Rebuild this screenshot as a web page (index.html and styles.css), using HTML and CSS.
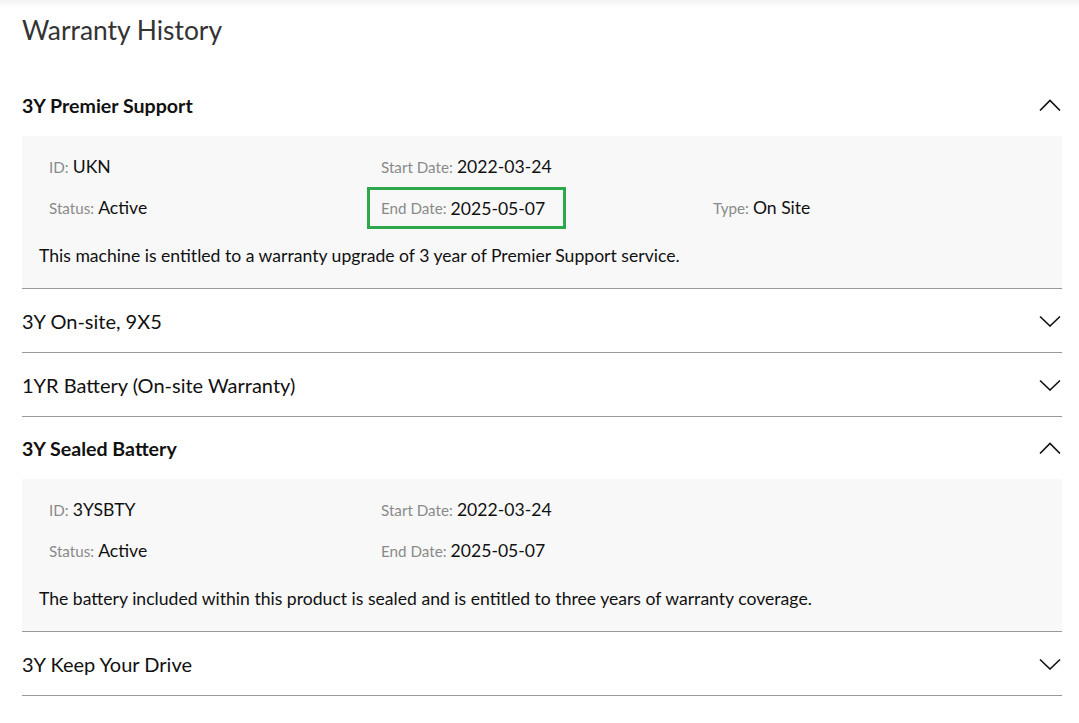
FILE: index.html
```html
<!DOCTYPE html>
<html lang="en">
<head>
<meta charset="utf-8">
<title>Warranty History</title>
<link rel="stylesheet" href="styles.css">
</head>
<body>
<main class="page">
  <h1 class="heading">Warranty History</h1>
  <div class="accordion">
    <section class="item open">
      <div class="item-head">
        <span class="item-title">3Y Premier Support</span>
        <svg class="chev" width="22" height="12" viewBox="0 0 22 12"><path d="M1 11.5 L11 1.5 L21 11.5" fill="none" stroke="#111" stroke-width="1.6"/></svg>
      </div>
      <div class="panel">
        <div class="fields">
          <div class="field"><span class="label">ID:</span>&nbsp;<span class="value">UKN</span></div>
          <div class="field"><span class="label">Start Date:</span>&nbsp;<span class="value">2022-03-24</span></div>
          <div class="field"></div>
          <div class="field"><span class="label">Status:</span>&nbsp;<span class="value">Active</span></div>
          <div class="field highlight"><span class="label">End Date:</span>&nbsp;<span class="value">2025-05-07</span></div>
          <div class="field"><span class="label">Type:</span>&nbsp;<span class="value">On Site</span></div>
        </div>
        <p class="desc">This machine is entitled to a warranty upgrade of 3 year of Premier Support service.</p>
      </div>
    </section>
    <section class="item">
      <div class="item-head">
        <span class="item-title">3Y On-site, 9X5</span>
        <svg class="chev" width="22" height="12" viewBox="0 0 22 12"><path d="M1 1.5 L11 11 L21 1.5" fill="none" stroke="#111" stroke-width="1.6"/></svg>
      </div>
    </section>
    <section class="item">
      <div class="item-head">
        <span class="item-title">1YR Battery (On-site Warranty)</span>
        <svg class="chev" width="22" height="12" viewBox="0 0 22 12"><path d="M1 1.5 L11 11 L21 1.5" fill="none" stroke="#111" stroke-width="1.6"/></svg>
      </div>
    </section>
    <section class="item open">
      <div class="item-head">
        <span class="item-title">3Y Sealed Battery</span>
        <svg class="chev" width="22" height="12" viewBox="0 0 22 12"><path d="M1 11.5 L11 1.5 L21 11.5" fill="none" stroke="#111" stroke-width="1.6"/></svg>
      </div>
      <div class="panel">
        <div class="fields">
          <div class="field"><span class="label">ID:</span>&nbsp;<span class="value">3YSBTY</span></div>
          <div class="field"><span class="label">Start Date:</span>&nbsp;<span class="value">2022-03-24</span></div>
          <div class="field"></div>
          <div class="field"><span class="label">Status:</span>&nbsp;<span class="value">Active</span></div>
          <div class="field"><span class="label">End Date:</span>&nbsp;<span class="value">2025-05-07</span></div>
          <div class="field"></div>
        </div>
        <p class="desc">The battery included within this product is sealed and is entitled to three years of warranty coverage.</p>
      </div>
    </section>
    <section class="item">
      <div class="item-head">
        <span class="item-title">3Y Keep Your Drive</span>
        <svg class="chev" width="22" height="12" viewBox="0 0 22 12"><path d="M1 1.5 L11 11 L21 1.5" fill="none" stroke="#111" stroke-width="1.6"/></svg>
      </div>
    </section>
  </div>
</main>
</body>
</html>
```

FILE: styles.css
```css
html, body {
  margin: 0;
  padding: 0;
}
body {
  background: linear-gradient(#f2f2f2, #ffffff 8px) no-repeat;
  background-color: #ffffff;
  font-family: Lato, "Open Sans", "Liberation Sans", sans-serif;
  color: #111;
}
.page {
  width: 1040px;
  padding: 12px 0 0 22px;
}
.heading {
  margin: 0 0 26px 0;
  font-size: 26.4px;
  line-height: 36px;
  font-weight: 400;
  color: #333;
}
.item {
  border-bottom: 1px solid #9a9a9a;
}
.item-head {
  height: 63px;
  display: flex;
  align-items: center;
  justify-content: space-between;
  padding-right: 1px;
}
.item.open .item-head {
  height: 62px;
}
.item-title {
  font-size: 20px;
  font-weight: 400;
  color: #111;
}
.item.open .item-title {
  font-size: 19.6px;
  font-weight: 700;
}
.chev {
  display: block;
}
.panel {
  background: #f8f8f8;
  padding: 10px 17px 20px 13px;
}
.fields {
  display: grid;
  grid-template-columns: 332px 332px 332px;
  grid-auto-rows: 41px;
}
.field {
  justify-self: start;
  display: flex;
  align-items: center;
  padding: 0 12px;
  border: 2px solid transparent;
  box-sizing: border-box;
  height: 41px;
  white-space: nowrap;
}
.field.highlight {
  border: 3px solid #2ea84b;
  padding: 0 18px 0 11px;
  height: 42px;
}
.label {
  font-size: 15.2px;
  color: #8a8a8a;
}
.value {
  font-size: 17.6px;
  color: #111;
}
.desc {
  margin: 16px 0 0 4px;
  font-size: 17.6px;
  line-height: 24px;
  color: #111;
}
```
